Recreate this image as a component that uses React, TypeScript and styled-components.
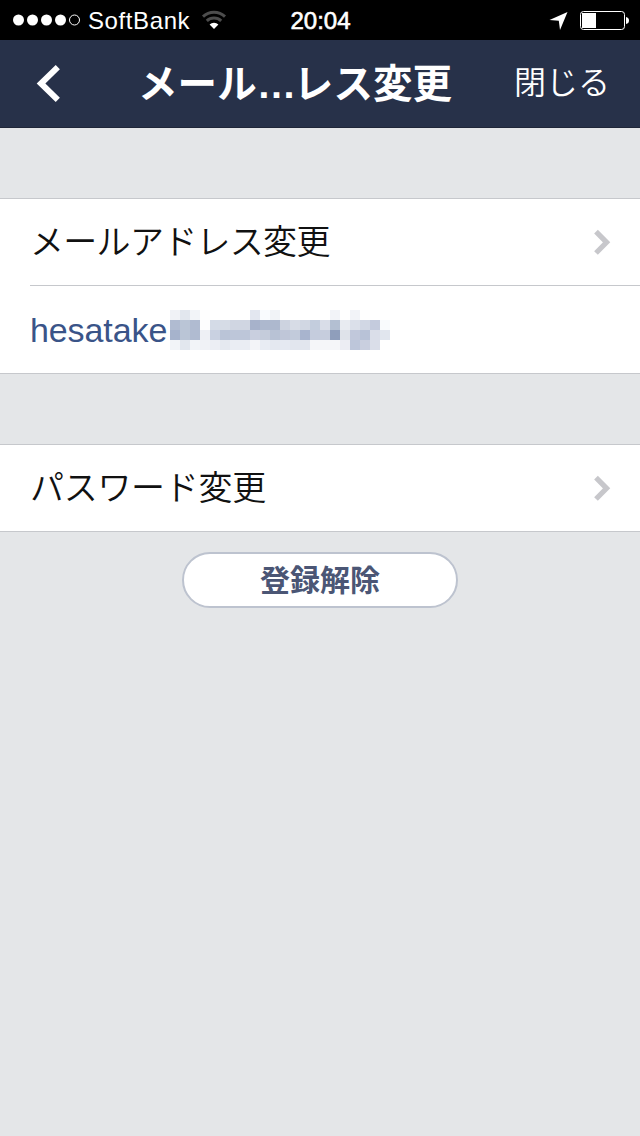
import React from "react";
import styled, { createGlobalStyle } from "styled-components";

const Global = createGlobalStyle`
  * { box-sizing: border-box; }
  body { margin: 0; background: #e4e6e8; }
`;

const latin = `"Liberation Sans", "Noto Sans CJK JP", sans-serif`;
const japanese = `"Noto Sans CJK JP", sans-serif`;

const Screen = styled.div`
  width: 640px;
  min-height: 1136px;
  background: #e4e6e8;
  font-family: ${japanese};
`;

const StatusBar = styled.div`
  display: grid;
  grid-template-columns: 1fr auto 1fr;
  align-items: center;
  height: 40px;
  padding: 0 11px 0 12px;
  background: #000;
  color: #fff;
  font-family: ${latin};
`;

const StatusGroup = styled.div<{ $end?: boolean }>`
  display: flex;
  align-items: center;
  justify-content: ${(p) => (p.$end ? "flex-end" : "flex-start")};
  height: 40px;
`;

const Signal = styled.svg`
  display: block;
  margin-right: 7px;
`;

const Carrier = styled.span`
  padding-top: 2px;
  font-size: 24px;
  line-height: 38px;
  letter-spacing: 0.6px;
  margin-right: 11px;
`;

const Clock = styled.span`
  padding-top: 2px;
  font-size: 24px;
  line-height: 38px;
  -webkit-text-stroke: 0.6px #fff;
`;

const Location = styled.svg`
  display: block;
  margin-right: 11px;
`;

const NavBar = styled.header`
  display: grid;
  grid-template-columns: 96px 1fr 140px;
  align-items: center;
  height: 88px;
  border-bottom: 1px solid #1f2638;
  background: #273149;
  color: #fff;
`;

const BackButton = styled.button`
  display: flex;
  align-items: center;
  height: 86px;
  padding: 0 0 2px 36px;
  border: 0;
  background: none;
`;

const Title = styled.h1`
  margin: 0 0 0 42px;
  padding-bottom: 4px;
  font: 700 39.5px/82px ${japanese};
  letter-spacing: 0.1px;
  white-space: nowrap;
`;

const Dots = styled.span`
  font-family: "Liberation Sans", sans-serif;
  letter-spacing: -2.5px;
`;

const CloseButton = styled.button`
  padding: 0 30px 10px 0;
  border: 0;
  background: none;
  color: #fff;
  font: 350 32px/76px ${japanese};
  text-align: right;
  white-space: nowrap;
`;

const Section = styled.section`
  margin-top: 70px;
  border: solid #c6c8cc;
  border-width: 1px 0;
  background: #fff;
`;

const Row = styled.div<{ $divided?: boolean }>`
  display: flex;
  align-items: center;
  justify-content: space-between;
  height: ${(p) => (p.$divided ? 88 : 86)}px;
  margin-left: 30px;
  padding-right: 29px;
  border-top: ${(p) => (p.$divided ? "1px solid #c6c8cc" : "0")};
`;

const Label = styled.span<{ $tight?: number }>`
  padding-bottom: 4px;
  color: #111;
  font-size: 34px;
  font-weight: 350;
  line-height: 80px;
  letter-spacing: ${(p) => p.$tight ?? 0}px;
  white-space: nowrap;
`;

const Address = styled.div`
  display: flex;
  align-items: center;
`;

const AddressName = styled.span`
  width: 140px;
  color: #3a5488;
  font: 34px/86px ${latin};
  letter-spacing: -0.1px;
  white-space: nowrap;
`;

const Mosaic = styled.div`
  display: grid;
  grid-template-columns: repeat(22, 10px);
  grid-auto-rows: 10px;
`;

const Cell = styled.i<{ $color: string }>`
  background: #${(p) => p.$color};
`;

const UnregisterButton = styled.button`
  display: block;
  width: 276px;
  height: 56px;
  margin: 20px auto 0;
  padding: 0 0 4px;
  border: 2px solid #bdc3cf;
  border-radius: 28px;
  background: #fff;
  color: #4b5675;
  font: 700 30px/48px ${japanese};
`;

const mosaicRows = [
  "f0f2f6 e2e7ee f2f4f8 fefefe ffffff ffffff ffffff ffffff e3e7f0 f9fbfe f1f3f7 ffffff ffffff ffffff ffffff ffffff f2f3f8 ffffff f2f3f8 fefefe ffffff ffffff",
  "b0bbd1 bac5d6 b0bbd1 fdfdfe d4dbe7 d6dce6 d0d6e2 d0d6e2 a7b2cb adb8ce adb8ce cdd3e0 d7dce6 d1d7e3 c3cddd d9dde8 b3bfd2 e8ebf1 dbe0ea d1d7e4 c4cbdd f9fbfd",
  "a6b3cc bac5d6 b0bbd1 eef0f5 c9d1e1 bac4d7 bdc6d9 bdc6d9 c9cfdf c5ccdb b8c2d5 bfc6d8 c2cbdb a8b4ce c5ccdd c6cddd 8f9ebb dfe3ea c1c8db b8c2d7 dadee9 e1e6ee",
  "f2f4f8 e2e7ee f2f4f8 f0f2f6 eceef4 e5e9f0 eaedf3 eaedf3 f3f4f8 e8ecf3 e4e8f0 e5e9f2 e2e6ee e2e6ee f5f6f9 f5f6f9 f5f6f9 ecedf3 bdc6da c9cfdf dadee9 ffffff",
];

const mosaicCells = mosaicRows.flatMap((row) => row.split(" "));

const Chevron = () => (
  <svg width="17" height="26" viewBox="0 0 17 26">
    <path d="M2 2.6 L12.6 13.3 L2 24" fill="none" stroke="#c7c7cb" strokeWidth="5.2" />
  </svg>
);

export default function App() {
  return (
    <Screen>
      <Global />
      <StatusBar>
        <StatusGroup>
          <Signal width="69" height="12" viewBox="0 0 69 12">
            {[6.5, 20.5, 34.5, 48.5].map((x) => (
              <circle key={x} cx={x} cy="6" r="5.5" fill="#fff" />
            ))}
            <circle cx="62.5" cy="6" r="5" fill="none" stroke="#fff" strokeWidth="1" />
          </Signal>
          <Carrier>SoftBank</Carrier>
          <svg width="26" height="20" viewBox="0 0 26 20">
            <path d="M2 6.6 A16.2 16.2 0 0 1 24 6.6" fill="none" stroke="#4d4d4d" strokeWidth="3" />
            <path d="M5.8 10.8 A10.5 10.5 0 0 1 20.2 10.8" fill="none" stroke="#4d4d4d" strokeWidth="3" />
            <path d="M13 19 L8.6 14.6 A6.2 6.2 0 0 1 17.4 14.6 Z" fill="#fff" />
          </svg>
        </StatusGroup>
        <Clock>20:04</Clock>
        <StatusGroup $end>
          <Location width="19" height="19" viewBox="0 0 19 19">
            <path d="M18.5 1 L11 19 L9.8 9.8 L0.5 9 Z" fill="#fff" />
          </Location>
          <svg width="50" height="20" viewBox="0 0 50 20">
            <rect x="1.5" y="1.5" width="44" height="18" rx="3" fill="none" stroke="#fff" strokeWidth="1" />
            <rect x="3" y="3" width="14" height="15" fill="#fff" />
            <path d="M47 7 Q50 7.5 50 10.5 Q50 13.5 47 14 Z" fill="#fff" />
          </svg>
        </StatusGroup>
      </StatusBar>

      <NavBar>
        <BackButton aria-label="戻る">
          <svg width="26" height="38" viewBox="0 0 26 38">
            <path d="M21.8 2.2 L5 18.5 L21.8 34.8" fill="none" stroke="#fff" strokeWidth="6" />
          </svg>
        </BackButton>
        <Title>
          メール<Dots>…</Dots>レス変更
        </Title>
        <CloseButton>閉じる</CloseButton>
      </NavBar>

      <Section>
        <Row>
          <Label $tight={-0.7}>メールアドレス変更</Label>
          <Chevron />
        </Row>
        <Row $divided>
          <Address>
            <AddressName>hesatake</AddressName>
            <Mosaic>
              {mosaicCells.map((color, i) => (
                <Cell key={i} $color={color} />
              ))}
            </Mosaic>
          </Address>
        </Row>
      </Section>

      <Section>
        <Row>
          <Label $tight={-0.3}>パスワード変更</Label>
          <Chevron />
        </Row>
      </Section>

      <UnregisterButton>登録解除</UnregisterButton>
    </Screen>
  );
}
